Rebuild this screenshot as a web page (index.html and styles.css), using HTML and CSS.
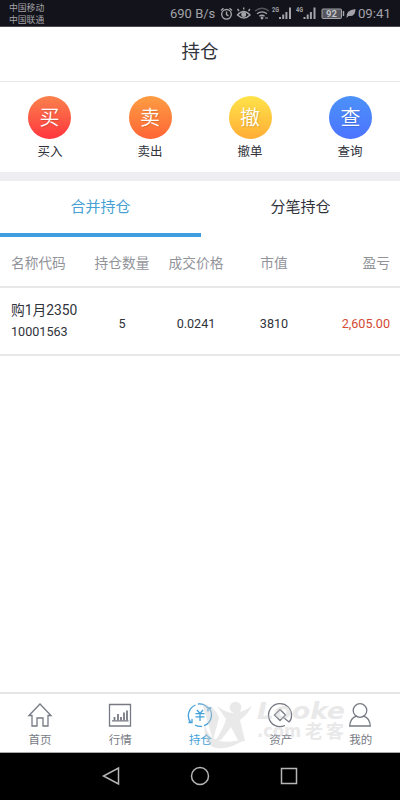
FILE: index.html
```html
<!DOCTYPE html>
<html lang="zh-CN">
<head>
<meta charset="utf-8">
<title>持仓</title>
<link rel="stylesheet" href="styles.css">
</head>
<body>
<div class="phone">
  <div class="status">
    <div class="carriers"><span>中国移动</span><span>中国联通</span></div>
    <div class="system">
      <span class="speed">690 B/s</span>
      <svg class="sys-icons" width="188" height="26" viewBox="216 0 188 26" fill="none" stroke="#a3a3a9" stroke-width="1.4">
        <circle cx="226.500" cy="14.300" r="4.800"/><path d="M226.500 11.500v3l2 1.300M221 10.500l2.500-2.200M232 10.500l-2.500-2.200"/>
        <path d="M237.500 15q6-7 12.500 0-6 6-12.500 0zM239 11l-1.500-2M243.700 9.500V7.500M248.500 11l1.500-2"/><circle cx="243.700" cy="14.500" r="1.800" fill="#a3a3a9"/>
        <path stroke="#55555c" d="M255 11q7-5.500 14 0"/><path d="M257 13.700q5-3.700 10 0M259.300 16.300q2.700-2 5.300 0"/><circle cx="262" cy="18" r=".7"/><path stroke-width="1" d="M265 18h3"/>
        <path stroke-width="2" d="M280 19v-2M283.200 19v-4.500M286.400 19v-7M290 19v-11.500M304.500 19v-2M307.700 19v-4.500M310.900 19v-7M314.500 19v-11.500"/>
        <rect x="322" y="9" width="19.500" height="9.500" rx="1" fill="#55555d" stroke-width="1"/><path d="M343.500 11v5"/>
        <path fill="#a3a3a9" stroke="none" d="M346.500 18q-1-8 9-9 0 8-7 7z"/>
        <g class="micro"><text x="272" y="12" textLength="7" lengthAdjust="spacingAndGlyphs">2G</text><text x="296" y="12" textLength="7" lengthAdjust="spacingAndGlyphs">4G</text><text class="level" x="326" y="17.300">92</text></g>
      </svg>
      <span class="clock">09:41</span>
    </div>
  </div>
  <header class="title">持仓</header>
  <nav class="actions">
    <div class="action"><span class="disc red">买</span><span>买入</span></div>
    <div class="action"><span class="disc orange">卖</span><span>卖出</span></div>
    <div class="action"><span class="disc yellow">撤</span><span>撤单</span></div>
    <div class="action"><span class="disc blue">查</span><span>查询</span></div>
  </nav>
  <div class="tabs"><div class="tab active">合并持仓</div><div class="tab">分笔持仓</div></div>
  <div class="row head"><span>名称代码</span><span>持仓数量</span><span>成交价格</span><span>市值</span><span>盈亏</span></div>
  <div class="row holding"><div class="stock"><span class="name">购1月2350</span><span>10001563</span></div><span>5</span><span>0.0241</span><span>3810</span><span class="profit">2,605.00</span></div>
  <main class="blank"></main>
  <nav class="bottom">
    <div class="item"><svg width="26" height="26" viewBox="0 0 26 26"><path d="M2 13.500 13 2l11 11.500h-3V24h-5v-8h-6v8H5V13.500z"/></svg><span>首页</span></div>
    <div class="item"><svg width="26" height="26" viewBox="0 0 26 26"><path d="M2.500 2.500h21v21.500h-21zM5 18.800h16.500"/><path stroke-width="1.800" d="M7.500 18.500V15M11 18.500v-6.500M14 18.500V15M17 18.500V10.500M20 18.500V8.500"/></svg><span>行情</span></div>
    <div class="item current"><svg width="26" height="26" viewBox="0 0 26 26"><path d="M4 21A11.500 11.500 0 0 1 8.500 3M11 2a11 11 0 0 1 9.500 3.500M22.500 6.500A11.500 11.500 0 0 1 17 23.700M15 24.300a11 11 0 0 1-7-1.300M1.500 20.500H5v-3.500M24.500 6H21v3.500"/><path d="m10 8 3 3.500L16 8M8.500 11.700h9M8.500 14.800h9M13 11.500v7.500"/></svg><span>持仓</span></div>
    <div class="item"><svg width="26" height="26" viewBox="0 0 26 26"><path d="M18 23.500A11.500 11.500 0 1 1 24.500 14q0 4-2.500 6L16.500 15.500M13 7.500l5.500 5.500-5.500 5.500L7.500 13z"/></svg><span>资产</span></div>
    <div class="item"><svg width="26" height="26" viewBox="0 0 26 26"><circle cx="13" cy="8.500" r="6.800"/><path d="M9.500 14.200Q3.200 16 2.700 24h20.600q-.5-8-6.800-9.800"/></svg><span>我的</span></div>
    <svg class="watermark" width="148" height="52" viewBox="200 698 148 52">
      <circle cx="235.500" cy="707.500" r="5.800"/>
      <path d="M217 706q9 7 16 7 9 0 19-7-5 9-12 14l5 21-6 1-8-15-10 13-6 1q9-13 11-22z"/>
      <path d="M202 703q14 4 17 15l-6 22q-5-17-11-37z"/>
      <path d="M205 723q3 26 40 16-15 11-29 9-14-3-11-25z"/>
      <text class="brand" x="257" y="718.500" textLength="88" lengthAdjust="spacingAndGlyphs">Looke</text>
      <text class="domain" x="257" y="737" textLength="44" lengthAdjust="spacingAndGlyphs">.com</text><text class="cn" x="305" y="738" textLength="39">老客</text>
    </svg>
  </nav>
  <div class="system-nav">
    <svg width="20" height="20" viewBox="0 0 20 20"><path d="M17.500 2v16L2.500 10z"/></svg>
    <svg width="20" height="20" viewBox="0 0 20 20"><circle cx="10" cy="10" r="8.500"/></svg>
    <svg width="20" height="20" viewBox="0 0 20 20"><path d="M2.500 2.500h15v15h-15z"/></svg>
  </div>
</div>
</body>
</html>
```
FILE: styles.css
```css
* { box-sizing: border-box; }
body { margin: 0; }
.phone { width: 400px; height: 800px; display: flex; flex-direction: column; background: #fff; color: #30333b; font-family: Roboto, "Noto Sans CJK SC", sans-serif; }
.status { flex: none; height: 27px; background: #13131b; border-bottom: 1px solid #4b4b51; color: #a3a3a9; display: flex; justify-content: space-between; padding: 2px 9px 0; }
.carriers { display: flex; flex-direction: column; font-size: 8.8px; line-height: 12px; }
.system { display: flex; position: relative; width: 221px; height: 24px; line-height: 24px; justify-content: space-between; }
.speed { font-size: 13px; white-space: nowrap; }
.clock { font-size: 13.3px; }
.sys-icons { position: absolute; left: 46px; top: -2px; }
.micro text { fill: #a3a3a9; stroke: none; font-size: 6.5px; font-weight: bold; }
.micro .level { font-size: 9.5px; fill: #c4c4c8; }
.title { flex: none; height: 55px; border-bottom: 1px solid #e8e8ea; text-align: center; font-size: 18.5px; line-height: 50px; }
.actions { flex: none; height: 99px; border-bottom: 9px solid #ededf2; display: grid; grid-template-columns: repeat(4, 100px); }
.action { display: flex; flex-direction: column; align-items: center; padding-top: 14px; font-size: 12.5px; line-height: 25px; }
.disc { width: 43px; height: 43px; border-radius: 50%; color: #fff; font-size: 20px; font-weight: 350; line-height: 45px; text-align: center; text-shadow: 1px 1px 1px #0002; }
.red { background: linear-gradient(#fa824c, #ff353e); margin-left: -1px; }
.orange { background: linear-gradient(#fd9d42, #ff6536); }
.yellow { background: linear-gradient(#ffe34a, #ffad35); }
.blue { background: linear-gradient(#4c92f8, #4c73ff); margin-left: 1px; }
.tabs { flex: none; height: 56px; display: grid; grid-template-columns: 201px 199px; grid-template-rows: 56px; font-size: 15px; line-height: 53px; text-align: center; }
.active { color: #479fd3; border-bottom: 4px solid #3f9ee0; }
.row { flex: none; display: grid; grid-template-columns: 74px 74px 74px 82px 75px; padding: 0 10px 0 11px; border-bottom: 2px solid #e7e7e9; text-align: center; }
.row > :first-child { text-align: left; }
.row > :last-child { text-align: right; }
.head { height: 51px; font-size: 13.7px; line-height: 53px; color: #919399; }
.holding { height: 68px; font-size: 12.6px; line-height: 71px; }
.stock { display: flex; flex-direction: column; line-height: 21px; padding-top: 12px; white-space: nowrap; }
.name { font-size: 13.8px; }
.profit { color: #d34a35; }
.blank { flex: 1; }
.bottom { position: relative; flex: none; height: 61px; border-top: 2px solid #e6e6e8; border-bottom: 1px solid #aaa; display: grid; grid-template-columns: repeat(5, 80.2px); color: #777a84; }
.item { display: flex; flex-direction: column; align-items: center; padding-top: 8px; font-size: 11.5px; line-height: 24px; }
.item svg { flex: none; fill: none; stroke: currentColor; stroke-width: 1.3; margin-left: -1px; }
.current { color: #45a1d9; }
.bottom .watermark { position: absolute; left: 200px; top: 4px; fill: #c9c9cb; opacity: .4; }
.brand { font: italic bold 23px "DejaVu Sans", sans-serif; }
.domain { font: bold 17px "DejaVu Sans", sans-serif; }
.cn { font-size: 18px; font-weight: bold; }
.system-nav { flex: none; height: 47px; background: #000; display: flex; justify-content: space-between; align-items: center; padding: 0 101px 1px; }
.system-nav svg { fill: none; stroke: #b6b6b6; stroke-width: 1.5; }
```
